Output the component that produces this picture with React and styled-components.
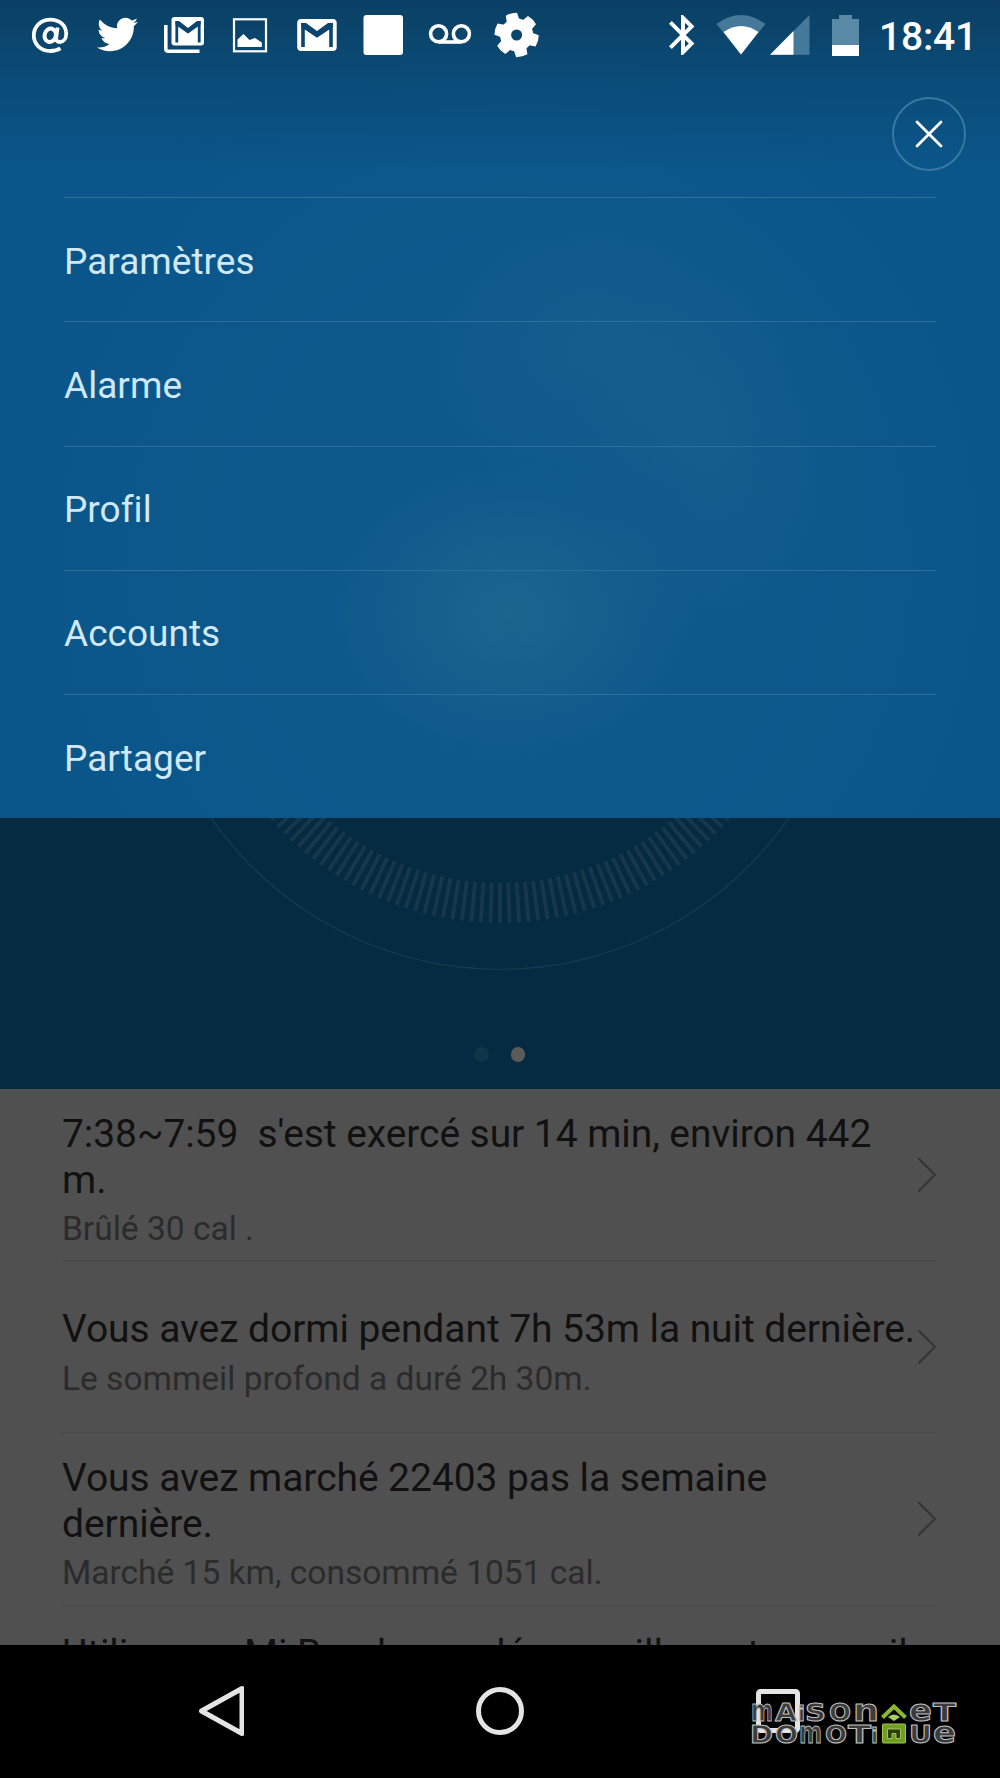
import React from 'react'

// Icons
import { FaTwitter } from 'react-icons/fa'
import { MdBluetooth } from 'react-icons/md'

import styled, { createGlobalStyle } from 'styled-components'

const GlobalStyle = createGlobalStyle`
  * {
    box-sizing: border-box;
  }
  body {
    margin: 0;
    background: #000;
    font-family: Roboto, 'Liberation Sans', sans-serif;
  }
`

const Screen = styled.div`
  display: flex;
  flex-direction: column;
  width: 1000px;
  height: 1778px;
  overflow: hidden;
`

// Menu
const MenuPanel = styled.section`
  flex: none;
  height: 817.5px;
  background:
    linear-gradient(180deg, rgba(11, 58, 90, 0.8) 0, rgba(11, 62, 96, 0.42) 80px, rgba(10, 87, 138, 0) 170px),
    radial-gradient(ellipse 190px 150px at 510px 615px, rgba(50, 120, 145, 0.36), rgba(50, 120, 145, 0) 100%),
    radial-gradient(ellipse 150px 190px at 720px 460px, rgba(40, 110, 145, 0.25), rgba(40, 110, 145, 0) 100%),
    radial-gradient(ellipse 200px 160px at 600px 340px, rgba(40, 110, 145, 0.28), rgba(40, 110, 145, 0) 100%),
    radial-gradient(ellipse 520px 560px at 520px 560px, rgba(22, 96, 144, 0.4), rgba(22, 96, 144, 0) 100%),
    #0a568a;
`

const StatusBar = styled.header`
  display: flex;
  justify-content: space-between;
  align-items: center;
  height: 70px;
  padding: 0 25px 0 17px;
  color: #fff;
`

const Notifications = styled.div`
  display: flex;
`

const IconSlot = styled.div`
  display: flex;
  justify-content: center;
  align-items: center;
  width: 66.67px;
  height: 48px;
`

const SystemIcons = styled.div`
  display: flex;
  align-items: center;
`

const Clock = styled.span`
  width: 96px;
  margin-left: 20px;
  padding-top: 4px;
  font-size: 39px;
  font-weight: 500;
  line-height: 46px;
  letter-spacing: -0.2px;
  white-space: nowrap;
`

const MenuHeader = styled.div`
  display: flex;
  justify-content: flex-end;
  height: 127.4px;
  padding: 27px 34px 0 0;
`

const CloseButton = styled.button`
  display: flex;
  justify-content: center;
  align-items: center;
  width: 74px;
  height: 74px;
  padding: 0;
  border: 2px solid #38799f;
  border-radius: 50%;
  background: transparent;
`

const MenuList = styled.ul`
  margin: 0;
  padding: 0 64px;
  list-style: none;
`

const MenuItem = styled.li`
  display: flex;
  align-items: center;
  height: 124.1px;
  padding-top: 3.5px;
  border-top: 1px solid #2b6f9b;
  color: #d0e8f7;
  font-size: 37px;
  letter-spacing: 0.03px;
`

// Activity dial
const Hero = styled.section`
  display: flex;
  flex-direction: column;
  align-items: center;
  flex: none;
  height: 271.5px;
  background: #042b42;
`

const Dots = styled.div`
  display: flex;
  gap: 22px;
  margin: 68.5px 1px 0 0;
`

const Dot = styled.span`
  width: 14.5px;
  height: 14.5px;
  border-radius: 50%;
  background: ${({ $active }) => ($active ? '#5d5b5a' : '#103448')};
`

// Activity feed
const Feed = styled.section`
  flex: none;
  height: 556px;
  padding: 0 64px 0 62px;
  overflow: hidden;
  background: #505050;
`

const FeedRow = styled.article`
  display: flex;
  justify-content: space-between;
  align-items: center;
  height: 172.2px;
  border-bottom: 1px solid #484848;

  svg {
    flex: none;
    margin-left: -4px;
  }
`

const FeedText = styled.div`
  flex: none;
  width: 857px;
  padding-top: ${({ $offset }) => $offset || 11}px;
`

const FeedTitle = styled.h2`
  min-height: ${({ $lines }) => ($lines || 1) * 45.5}px;
  margin: 0;
  color: #111;
  font-size: 39px;
  font-weight: 400;
  line-height: 45.5px;
  letter-spacing: -0.07px;
`

const FeedDetail = styled.p`
  min-height: 39px;
  margin: 6px 0 0;
  color: #2b2b2b;
  font-size: 33.5px;
  line-height: 39px;
`

// Bottom navigation
const NavBar = styled.nav`
  position: relative;
  display: flex;
  justify-content: center;
  gap: 226px;
  flex: 1;
  padding-top: 36px;
  background: #000;
`

const Watermark = styled.svg`
  position: absolute;
  left: 748px;
  top: 54px;
`

const At = () => (
  <svg width="48" height="48" viewBox="0 0 48 48" fill="none" stroke="currentColor">
    <path
      d="M34.4 37.2C31.4 39.3 28 40 24.5 40C14.8 40 7.8 33.4 7.8 24.6C7.8 15.4 15 8.6 24.4 8.6C33.8 8.6 40.2 14.8 40.2 22.8C40.2 28 37.2 31 33.8 31C31 31 29.8 29.2 30.2 26.6L31.6 16.6"
      strokeWidth="3.8"
    />
    <ellipse cx="24.3" cy="24.2" rx="5.6" ry="6.8" transform="rotate(15 24 24)" strokeWidth="4" />
  </svg>
)

const Twitter = () => (
  <svg width="42" height="42" viewBox="-1 0 42 42">
    <FaTwitter x="0" y="0" size={41} />
  </svg>
)

const GmailStack = () => (
  <svg width="48" height="48" viewBox="0 0 48 48" fill="none" stroke="currentColor">
    <rect x="11.5" y="6" width="32.5" height="28.5" rx="3" fill="currentColor" stroke="none" />
    <path d="M16.8 31.5V12.5L28 20.5L39.2 12.5V31.5" stroke="#0b456e" strokeWidth="2.8" />
    <path d="M15.4 10H19L28 17L37 10H40.6V13.5L28 22.5L15.4 13.5Z" fill="#0b456e" stroke="none" />
    <path d="M5.8 14V37.5Q5.8 40.2 8.5 40.2H39.5" strokeWidth="3.6" />
  </svg>
)

const Gmail = () => (
  <svg width="48" height="48" viewBox="0 0 48 48" fill="none">
    <rect x="4.2" y="8" width="39.5" height="32" rx="4" fill="currentColor" />
    <path d="M10 36V15L24 24.5L38 15V36" stroke="#0b456e" strokeWidth="3.6" />
    <path d="M8.2 12H13L24 20L35 12H39.8V16L24 26L8.2 16Z" fill="#0b456e" />
  </svg>
)

const Picture = () => (
  <svg width="48" height="48" viewBox="0 0 48 48" fill="none">
    <rect x="8" y="8.3" width="32" height="32" stroke="currentColor" strokeWidth="2.2" />
    <path d="M11.5 36V28.5L17.5 23L23.5 29L29 27L35.8 31.5V36Z" fill="currentColor" />
  </svg>
)

const Square = () => (
  <svg width="48" height="48" viewBox="0 0 48 48">
    <rect x="3.5" y="4" width="39.5" height="40" rx="3" fill="currentColor" />
  </svg>
)

const Voicemail = () => (
  <svg width="48" height="48" viewBox="0 0 48 48" fill="none" stroke="currentColor" strokeWidth="3.6">
    <circle cx="12.6" cy="22.8" r="8" />
    <circle cx="35.4" cy="22.8" r="8" />
    <path d="M12.6 31H35.4" />
  </svg>
)

const Gear = () => (
  <svg width="48" height="48" viewBox="0 0 48 48">
    <circle cx="23.6" cy="24" r="11" fill="none" stroke="currentColor" strokeWidth="11" />
    {[0, 60, 120, 180, 240, 300].map((angle) => (
      <path
        key={angle}
        d="M17 12L17.8 2.6Q23.6 1 29.4 2.6L30.2 12Z"
        fill="currentColor"
        transform={`rotate(${angle - 14} 23.6 24)`}
      />
    ))}
  </svg>
)

const Wifi = () => (
  <svg width="50" height="40" viewBox="0 0 50 40">
    <path d="M25 39.5L0.5 9Q25 -9 49.5 9Z" fill="#44799a" />
    <path d="M25 39.5L7.5 17Q25 5 42.5 17Z" fill="#fff" />
  </svg>
)

const Signal = () => (
  <svg width="40" height="40" viewBox="0 0 40 40">
    <path d="M0 39.7L39.5 0V39.7Z" fill="#44799a" />
    <path d="M0 39.7L23.5 16V39.7Z" fill="#fff" />
  </svg>
)

const Battery = () => (
  <svg width="27" height="41" viewBox="0 0 27 41">
    <path d="M0 4H7V0H20V4H27V41H0Z" fill="#598aa5" />
    <path d="M0 30H27V41H0Z" fill="#fff" />
  </svg>
)

const Gap = styled.span`
  width: ${({ $size }) => $size}px;
`

const notifications = [At, Twitter, GmailStack, Picture, Gmail, Square, Voicemail, Gear]

const menu = ['Paramètres', 'Alarme', 'Profil', 'Accounts', 'Partager']

const feed = [
  {
    title: "7:38~7:59\u00a0 s'est exercé sur 14 min, environ 442 m.",
    detail: 'Brûlé 30 cal .',
  },
  {
    title: 'Vous avez dormi pendant 7h 53m la nuit dernière.',
    detail: 'Le sommeil profond a duré 2h 30m.',
  },
  {
    title: 'Vous avez marché 22403 pas la semaine dernière.',
    detail: 'Marché 15 km, consommé 1051 cal.',
  },
  {
    title: 'Utiliser un Mi Band pour déverrouiller cet appareil',
    detail: '',
    lines: 2,
    offset: 17,
  },
]

// 200 ticks for a full turn, only the lower ones are visible under the menu
const ticks = Array.from({ length: 63 }, (_, i) => (i - 31) * 1.8)

const Dial = () => (
  <svg width="1000" height="161" viewBox="0 817.5 1000 161">
    <circle cx="500" cy="617.6" r="351.2" fill="none" stroke="#17394b" strokeWidth="1.3" />
    {ticks.map((angle) => (
      <path
        key={angle}
        d="M500 882.5V922.5"
        stroke="#173849"
        strokeWidth="3.8"
        transform={`rotate(${angle} 500 617.6)`}
      />
    ))}
  </svg>
)

const Chevron = () => (
  <svg width="20" height="36" viewBox="0 0 20 36">
    <path d="M2.4 1.2L19 17.8L2.4 34.4" fill="none" stroke="#363636" strokeWidth="2.2" />
  </svg>
)

const logoText = [
  { text: 'm', x: 3, y: 19.5, w: 22, size: 31 },
  { text: 'A', x: 27, y: 19.5, w: 22 },
  { text: 'i', x: 50, y: 19.5, w: 7, size: 22 },
  { text: 'S', x: 57, y: 19.5, w: 21 },
  { text: 'O', x: 81, y: 19.5, w: 22 },
  { text: 'n', x: 105, y: 19.5, w: 26, size: 31 },
  { text: 'e', x: 161, y: 19.5, w: 23, size: 30 },
  { text: 'T', x: 185, y: 19.5, w: 23 },
  { text: 'D', x: 2, y: 42, w: 23 },
  { text: 'O', x: 27, y: 42, w: 23 },
  { text: 'm', x: 51, y: 42, w: 23, size: 31 },
  { text: 'O', x: 77, y: 42, w: 22 },
  { text: 'T', x: 100, y: 42, w: 23 },
  { text: 'i', x: 123, y: 42, w: 7, size: 22 },
  { text: 'U', x: 161, y: 42, w: 23 },
  { text: 'e', x: 185, y: 42, w: 23, size: 30 },
]

const Logo = () => (
  <Watermark width="212" height="50" viewBox="0 -2 212 50">
    <g
      fill="#3b3b3b"
      stroke="#bdbdbd"
      strokeWidth="1"
      fontFamily="'DejaVu Sans', sans-serif"
      fontWeight="700"
    >
      {logoText.map(({ text, x, y, w, size }) => (
        <text
          key={x + '-' + y}
          x={x}
          y={y}
          fontSize={size || 24}
          textLength={w}
          lengthAdjust="spacingAndGlyphs"
        >
          {text}
        </text>
      ))}
    </g>
    <path d="M134.5 16.5L146 5.5L157.5 16.5" fill="none" stroke="#8ab833" strokeWidth="4" />
    <path d="M140 16Q146 11 152 16L146 20Z" fill="#a5cf62" />
    <rect x="134.5" y="23" width="23" height="19" rx="1" fill="#6f9e22" stroke="#a3c653" strokeWidth="1" />
    <path d="M139.5 37.5V28H152.5V37.5H148V32.5H144V37.5Z" fill="#2c3f0e" stroke="#b6d67a" strokeWidth="0.8" />
  </Watermark>
)

const App = () => {
  return (
    <Screen>
      <GlobalStyle />
      <MenuPanel>
        <StatusBar>
          <Notifications>
            {notifications.map((Icon, index) => (
              <IconSlot key={index}>
                <Icon />
              </IconSlot>
            ))}
          </Notifications>
          <SystemIcons>
            <MdBluetooth size={48} />
            <Gap $size={9} />
            <Wifi />
            <Gap $size={4} />
            <Signal />
            <Gap $size={22} />
            <Battery />
            <Clock>18:41</Clock>
          </SystemIcons>
        </StatusBar>
        <MenuHeader>
          <CloseButton aria-label="Fermer">
            <svg width="28" height="28" viewBox="0 0 28 28">
              <path
                d="M2 2L26 26M26 2L2 26"
                stroke="#fff"
                strokeWidth="2.8"
                strokeLinecap="round"
              />
            </svg>
          </CloseButton>
        </MenuHeader>
        <MenuList>
          {menu.map((label) => (
            <MenuItem key={label}>{label}</MenuItem>
          ))}
        </MenuList>
      </MenuPanel>

      <Hero>
        <Dial />
        <Dots>
          <Dot />
          <Dot $active />
        </Dots>
      </Hero>

      <Feed>
        {feed.map(({ title, detail, lines, offset }) => (
          <FeedRow key={title}>
            <FeedText $offset={offset}>
              <FeedTitle $lines={lines}>{title}</FeedTitle>
              <FeedDetail>{detail}</FeedDetail>
            </FeedText>
            <Chevron />
          </FeedRow>
        ))}
      </Feed>

      <NavBar>
        <svg width="60" height="60" viewBox="0 0 60 60">
          <path
            d="M17.5 30L58 7.5V52.5Z"
            fill="none"
            stroke="#e4e4e4"
            strokeWidth="5"
            strokeLinejoin="round"
          />
        </svg>
        <svg width="60" height="60" viewBox="0 0 60 60">
          <circle cx="30" cy="30" r="21.5" fill="none" stroke="#e4e4e4" strokeWidth="5" />
        </svg>
        <svg width="60" height="60" viewBox="0 0 60 60">
          <rect x="2.5" y="10.5" width="39" height="39" rx="2" fill="none" stroke="#e4e4e4" strokeWidth="5" />
        </svg>
        <Logo />
      </NavBar>
    </Screen>
  )
}

export default App
